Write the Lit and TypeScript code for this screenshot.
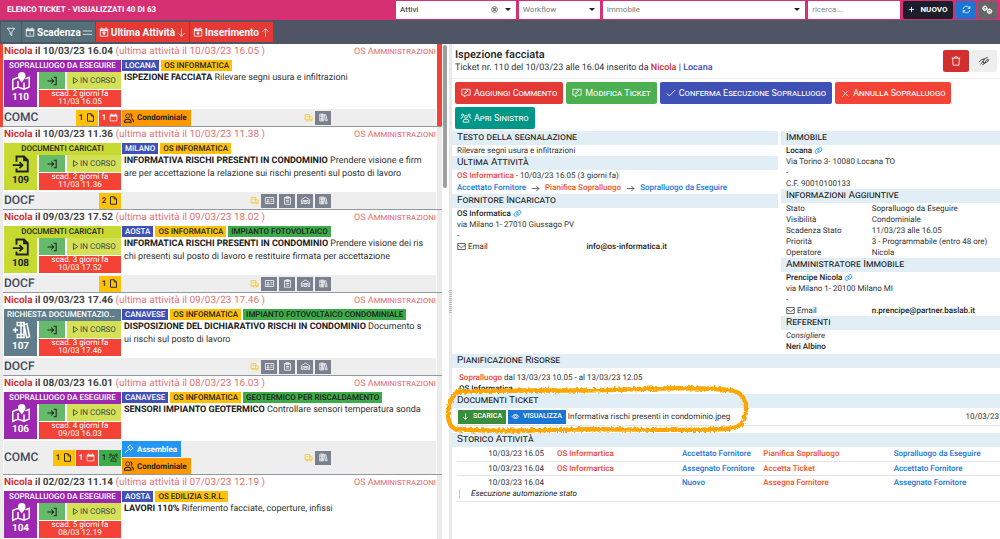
import { LitElement, html, css, svg, nothing } from "lit";
import { customElement, property } from "lit/decorators.js";

const ICONS: Record<string, any> = {
  filter: svg`<path d="M3 3h18l-7 9v9l-4-3v-6z"/>`,
  calInfo: svg`<path d="M3 5h18v17H3zM7 1v4M17 1v4"/><path d="M3 8h18" stroke-width="4"/><path d="M12 12v1M12 14.500v4"/>`,
  calStar: svg`<path d="M3 5h18v17H3zM7 1v4M17 1v4"/><path d="M3 8h18" stroke-width="4"/><path d="M12 11l1 2.300 2.500.2-2 1.600.7 2.400-2.200-1.300-2.200 1.300.7-2.400-2-1.600 2.500-.2z" fill="currentColor"/>`,
  calPlus: svg`<path d="M3 5h18v17H3zM7 1v4M17 1v4"/><path d="M3 8h18" stroke-width="4"/><path d="M12 11.500v7M8.500 15h7" stroke-width="3"/>`,
  calendar: svg`<path d="M3 5h18v16H3zM7 1v4M17 1v4"/><path d="M3 7.500h18" stroke-width="4"/>`,
  equal: svg`<path d="M0 8h24M0 17h24"/>`,
  down: svg`<path d="M12 1v21M4 14l8 8 8-8"/>`,
  up: svg`<path d="M12 23V2M4 10l8-8 8 8"/>`,
  right: svg`<path d="M2 12h19M14 5l7 7-7 7"/>`,
  plus: svg`<path d="M12 3v18M3 12h18"/>`,
  check: svg`<path d="M2 13l6 6L22 5"/>`,
  cross: svg`<path d="M4 4l16 16M20 4L4 20"/>`,
  play: svg`<path d="M5 2l15 10-15 10z"/>`,
  enter: svg`<path d="M1 12h14M10 6l6 6-6 6M16 3h6v18h-6" stroke-width="2.500"/>`,
  clear: svg`<circle cx="12" cy="12" r="10" stroke-width="3"/><path d="M7 7l10 10M17 7L7 17" stroke-width="5"/>`,
  refresh: svg`<path d="M3 11a9 9 0 0 1 15.500-5L21 9M21 3v6h-6M21 13a9 9 0 0 1-15.500 5L3 15M3 21v-6h6"/>`,
  cogs: svg`<circle cx="7" cy="8" r="4.500" stroke-width="3"/><circle cx="7" cy="8" r="1"/><path d="M7 1v2M7 13v2M0 8h2M12 8h2"/><circle cx="18" cy="15" r="4.500" stroke-width="3"/><circle cx="18" cy="15" r="1"/><path d="M18 8v2M18 20v2M23 15h2"/>`,
  comment: svg`<path d="M2 3h20v14h-9l-5 5v-5H2z"/><path d="M9 13l1-3 5-5 2 2-5 5z"/>`,
  users: svg`<circle cx="12" cy="9" r="3.500"/><path d="M5 22v-2a5 5 0 0 1 5-5h4a5 5 0 0 1 5 5v2z"/><circle cx="4" cy="5" r="2.500"/><circle cx="20" cy="5" r="2.500"/><path d="M0 14c0-3 2-4 5-4M24 14c0-3-2-4-5-4"/>`,
  trash: svg`<path d="M2 5h20M8 5l1-3h6l1 3M4 5l1 17h14l1-17"/>`,
  hide: svg`<path d="M0 15c4-6 8-8 14-8M24 9c-3 5-8 8-14 8M4 20c3-5 6-5 8-11 1-3 5-5 9-5M8 21c5-2 7-4 8-8 1-3 4-4 7-5M9 12c-1 3 1 4 3 3"/>`,
  link: svg`<ellipse cx="8.500" cy="13.500" rx="7" ry="4.500" transform="rotate(-55 8.500 13.500)"/><ellipse cx="15.500" cy="10.500" rx="7" ry="4.500" transform="rotate(-55 15.500 10.500)"/>`,
  mail: svg`<path d="M2 4h20v16H2zM2 8l10 7 10-7"/>`,
  eye: svg`<path d="M1 12c5-9 17-9 22 0-5 9-17 9-22 0z"/><circle cx="12" cy="12" r="4"/>`,
  file: svg`<path d="M4 2h10l6 6v14H4zM14 2v6h6" stroke-width="2.500"/>`,
  people: svg`<circle cx="9" cy="7" r="5"/><path d="M1 22c0-5 3-7 8-7s8 2 8 7zM15 2a5 5 0 0 1 2 9M18 14c4 1 5 4 5 8" stroke-width="2.500"/>`,
  hammer: svg`<path d="M2 21l9-8M9 7l7 9M9 8l6-6M15 15l7-5M14 2l8 9"/>`,
  map: svg`<path d="M9 8L7 7.500 1 10v13l7-3 8 3 7-3V7l-5 2M8 12v8M16 14v9" stroke-width="2"/><path d="M13 14c-3-4-5-6-5-9a5 5 0 0 1 10 0c0 3-2 5-5 9z" fill="currentColor" stroke="none"/>`,
  docIn: svg`<path d="M6 9V2h10l5 5v15H6v-4M16 2v5h5M1 13.500h13M10 9.500l4 4-4 4" stroke-width="2.500"/>`,
  books: svg`<path d="M7 7V2h5v20H7v-5M12 2h4v20h-4M1 12h7M4.500 8.500v7M16 5l4-1 3.500 17-4 1zM7 6h9M7 18h9" stroke-width="2"/>`,
  truck: svg`<path d="M6 18H3V4h12v14h-5M15 9h4l3 4v5h-2M6 9h6"/><circle cx="8" cy="19" r="2.300"/><circle cx="18" cy="19" r="2.300"/>`,
  card: svg`<path d="M1 4h22v16H1zM14 9h6M14 14h6"/><circle cx="8" cy="10" r="1.500"/><path d="M4.500 16c0-3 7-3 7 0z"/>`,
  clip: svg`<path d="M4 4h16v18H4zM8 2h8v5H8zM8 12h8M8 16h8"/>`,
  camera: svg`<path d="M1 20V10l11-7 11 7v10h-4v-8H5v8zM8 15h8v5H8z"/>`,
  shelf: svg`<path d="M2 3h6v18H2zM8 3h5v18H8zM14 5l4-1 4 16-4 1zM2 8h11M2 16h11"/>`,
};

const icon = (name: string, cls = "i9") => html`<svg class="ico ${cls}" viewBox="0 0 24 24" aria-hidden="true">${ICONS[name]}</svg>`;

const base = css`
  * { box-sizing: border-box; }
  .ico { flex: none; fill: none; stroke: currentColor; stroke-width: 2; overflow: visible; }
  .i7 { width: 7px; height: 7px; stroke-width: 3; }
  .i9 { width: 9px; height: 9px; }
  .i10 { width: 10px; height: 10px; }
  .i18 { width: 18px; height: 18px; }
  button { font: inherit; color: inherit; border: 0; padding: 0; margin: 0; background: none; cursor: pointer; }
  a { color: inherit; text-decoration: none; }
`;

interface Ticket {
  nr: number;
  date: string;
  last: string;
  state: string;
  kind: "visit" | "docs" | "request";
  due: string;
  days: number;
  tags: [string, string][];
  title: string;
  text: string;
  code: string;
  counts: [number, string, string][];
  groups: [string, string, string][];
  tools: string[];
}

const ALL_TOOLS = ["card", "clip", "camera", "shelf"];

const TICKETS: Ticket[] = [
  { nr: 110, date: "10/03/23 16.04", last: "10/03/23 16.05", state: "Sopralluogo da Eseguire", kind: "visit", due: "11/03 16.05", days: 2,
    tags: [["Locana", "blue"], ["OS Informatica", "amber"]], title: "ISPEZIONE FACCIATA", text: "Rilevare segni usura e infiltrazioni",
    code: "COMC", counts: [[1, "file", "amber"], [1, "calendar", "red"]], groups: [["people", "Condominiale", "orange"]], tools: ["shelf"] },
  { nr: 109, date: "10/03/23 11.36", last: "10/03/23 11.38", state: "Documenti Caricati", kind: "docs", due: "11/03 11.36", days: 2,
    tags: [["Milano", "blue"], ["OS Informatica", "amber"]], title: "INFORMATIVA RISCHI PRESENTI IN CONDOMINIO", text: "Prendere visione e firmare per accettazione la relazione sui rischi presenti sul posto di lavoro",
    code: "DOCF", counts: [[2, "file", "amber"]], groups: [], tools: ALL_TOOLS },
  { nr: 108, date: "09/03/23 17.52", last: "09/03/23 18.02", state: "Documenti Caricati", kind: "docs", due: "10/03 17.52", days: 3,
    tags: [["Aosta", "blue"], ["OS Informatica", "amber"], ["Impianto Fotovoltaico", "green"]], title: "INFORMATICA RISCHI PRESENTI IN CONDOMINIO", text: "Prendere visione dei rischi presenti sul posto di lavoro e restituire firmata per accettazione",
    code: "DOCF", counts: [[1, "file", "amber"]], groups: [], tools: ALL_TOOLS },
  { nr: 107, date: "09/03/23 17.46", last: "09/03/23 17.46", state: "Richiesta Documentazione", kind: "request", due: "10/03 17.46", days: 3,
    tags: [["Canavese", "blue"], ["OS Informatica", "amber"], ["Impianto Fotovoltaico Condominiale", "green"]], title: "DISPOSIZIONE DEL DICHIARATIVO RISCHI IN CONDOMINIO", text: "Documento sui rischi sul posto di lavoro",
    code: "DOCF", counts: [], groups: [], tools: ALL_TOOLS },
  { nr: 106, date: "08/03/23 16.01", last: "08/03/23 16.03", state: "Sopralluogo da Eseguire", kind: "visit", due: "09/03 16.03", days: 4,
    tags: [["Canavese", "blue"], ["OS Informatica", "amber"], ["Geotermico per Riscaldamento", "green"]], title: "SENSORI IMPIANTO GEOTERMICO", text: "Controllare sensori temperatura sonda",
    code: "COMC", counts: [[1, "file", "amber"], [1, "calendar", "red"], [1, "users", "green"]], groups: [["hammer", "Assemblea", "sky"], ["people", "Condominiale", "orange"]], tools: ["shelf"] },
  { nr: 104, date: "02/02/23 11.14", last: "07/03/23 12.19", state: "Sopralluogo da Eseguire", kind: "visit", due: "08/03 12.19", days: 5,
    tags: [["Aosta", "blue"], ["OS Edilizia S.r.l.", "amber"]], title: "LAVORI 110%", text: "Riferimento facciate, coperture, infissi",
    code: "COMC", counts: [[1, "file", "amber"]], groups: [], tools: ["shelf"] },
];

const KIND_ICON = { visit: "map", docs: "docIn", request: "books" };

@customElement("ticket-row")
class TicketRow extends LitElement {
  @property({ attribute: false }) ticket!: Ticket;
  @property({ type: Boolean, reflect: true }) selected = false;

  static styles = [base, css`
    :host { display: block; flex: none; border-left: 3px solid #ebebeb; border-right: 5px solid #ebebeb; }
    :host([selected]) { border-color: #f44336; }
    .row { border-bottom: 1px solid #8f9a9f; padding-left: 1px; margin-right: -5px; padding-right: 6px; }
    .head { display: flex; justify-content: space-between; height: 16px; line-height: 16px; font-size: 10px; font-weight: 700; color: #424242; white-space: nowrap; }
    .who { color: #d32f2f; }
    .when { color: #e57373; font-weight: 400; }
    .owner { color: #e57373; font-size: 9px; font-weight: 400; font-variant: small-caps; }
    .body { display: grid; grid-template-columns: 117px minmax(0, 1fr); column-gap: 1px; margin-bottom: 2px; }
    .status { display: grid; grid-template-columns: 33px 26px minmax(0, 1fr); grid-template-rows: 11px 17px 17px; gap: 1px 2px; text-align: center; }
    .state { grid-column: 1 / -1; height: 12px; line-height: 12px; font-size: 8px; font-weight: 500; text-transform: uppercase; overflow: hidden; text-overflow: ellipsis; white-space: nowrap; padding: 0 3px; }
    .badge { grid-row: 2 / 4; display: flex; flex-direction: column; align-items: center; justify-content: space-between; font-size: 10px; font-weight: 700; line-height: 14px; padding: 0 0 2px; }
    .visit { background: #9c27b0; color: #fff; }
    .docs { background: #c6d930; color: #212121; }
    .request { background: #607d8b; color: #fff; }
    .enter { background: #66bb6a; color: #212121; display: flex; align-items: center; justify-content: center; }
    .run { background: #d4e157; color: #37474f; display: flex; align-items: center; justify-content: center; gap: 1px; font-size: 8px; }
    .due { grid-column: 2 / 4; background: #f44336; color: #fff; font-size: 8px; line-height: 8px; }
    .tags { display: flex; gap: 2px; height: 11px; line-height: 11px; font-size: 8px; font-weight: 500; white-space: nowrap; text-transform: uppercase; }
    .tag { padding: 0 3px; }
    .text { margin: 0; padding: 1px 10px 0 2px; font-size: 9px; line-height: 13px; word-break: break-all; color: #333; }
    .text b { font-weight: 700; color: #212121; }
    .foot { display: grid; grid-template-columns: 117px minmax(0, 1fr) 24%; column-gap: 1px; align-items: center; min-height: 17px; background: #eee; }
    .left { display: flex; gap: 1px; align-items: center; }
    .code { flex: 1; font-size: 12px; line-height: 17px; font-weight: 500; color: #44475c; }
    .count { display: flex; align-items: center; justify-content: center; gap: 3px; width: 22px; height: 16px; font-size: 8px; font-weight: 500; }
    .mid { display: flex; align-items: center; justify-content: space-between; }
    .groups { display: flex; flex-direction: column; align-items: flex-start; gap: 1px; }
    .group { display: flex; align-items: center; gap: 3px; height: 16px; padding: 0 4px 0 2px; font-size: 8px; font-weight: 700; }
    .tools { display: flex; align-items: center; gap: 2px; color: #fff; }
    .truck { color: #ffc107; display: flex; }
    .tool { width: 16px; height: 14px; background: #7b808e; display: flex; align-items: center; justify-content: center; }
    .blue { background: #3f51b5; color: #fff; }
    .amber { background: #ffc107; color: #212121; }
    .green { background: #3dab49; color: #1b1b1b; }
    .red { background: #f44336; color: #fff; }
    .orange { background: #ff9800; color: #212121; }
    .sky { background: #2196f3; color: #fff; }
  `];

  render() {
    const t = this.ticket;
    return html`
      <article class="row">
        <header class="head">
          <span><span class="who">Nicola</span> il ${t.date} <span class="when">(ultima attività il ${t.last} )</span></span>
          <span class="owner">OS Amministrazioni</span>
        </header>
        <div class="body">
          <div class="status">
            <div class="state ${t.kind}">${t.state}</div>
            <div class="badge ${t.kind}">${icon(KIND_ICON[t.kind], "i18")}${t.nr}</div>
            <button class="enter" aria-label="Entra">${icon("enter", "i10")}</button>
            <div class="run">${icon("play", "i7")}IN CORSO</div>
            <div class="due">scad. ${t.days} giorni fa<br>${t.due}</div>
          </div>
          <div>
            <div class="tags">${t.tags.map(([n, c]) => html`<span class="tag ${c}">${n}</span>`)}</div>
            <p class="text"><b>${t.title}</b> ${t.text}</p>
          </div>
        </div>
        <footer class="foot">
          <div class="left">
            <span class="code">${t.code}</span>
            ${t.counts.map(([n, i, c]) => html`<span class="count ${c}">${n}${icon(i)}</span>`)}
          </div>
          <div class="mid">
            <div class="groups">${t.groups.map(([i, n, c]) => html`<span class="group ${c}">${icon(i, "i10")}${n}</span>`)}</div>
            <div class="tools">
              <span class="truck">${icon("truck")}</span>
              ${t.tools.map((n) => html`<button class="tool" aria-label=${n}>${icon(n)}</button>`)}
            </div>
          </div>
        </footer>
      </article>`;
  }
}

@customElement("ticket-detail")
class TicketDetail extends LitElement {
  static styles = [base, css`
    :host { display: block; min-width: 0; background: #fff; color: #333; font-size: 8px; line-height: 11px; }
    .top { display: flex; justify-content: space-between; align-items: center; height: 35px; padding: 0 3px; border-bottom: 1px solid #eee; }
    .title { margin: 0; font-size: 11px; line-height: 15px; font-weight: 500; color: #212121; }
    .sub { margin: 0; font-size: 9px; line-height: 13px; }
    .sub .red { color: #d32f2f; }
    .sub .indigo { color: #3f51b5; }
    .side { display: flex; gap: 2px; }
    .sq { width: 26px; height: 22px; border-radius: 2px; display: flex; align-items: center; justify-content: center; }
    .del { background: #d32f2f; color: #fff; }
    .hide { background: #eee; color: #212121; }
    .actions { display: flex; flex-wrap: wrap; gap: 3px; padding: 3px 3px 2px; }
    .act { height: 22px; padding: 0 6px; border-radius: 2px; display: flex; align-items: center; gap: 3px; color: #fff; font-size: 9px; font-weight: 400; font-variant: small-caps; white-space: nowrap; }
    .a-red { background: #e53935; }
    .a-green { background: #4caf50; }
    .a-indigo { background: #3f51b5; }
    .a-coral { background: #f44336; }
    .a-teal { background: #009688; }
    .cols { display: grid; grid-template-columns: minmax(0, 326fr) minmax(0, 219fr); column-gap: 3px; }
    .h { margin: 0; padding: 0 5px; height: 14px; line-height: 14px; font-size: 10px; font-weight: 400; font-variant: small-caps; color: #212121; background: #e1eef6; }
    .p { padding: 0 5px; }
    .pair { display: grid; grid-template-columns: 41% 59%; margin: 0; }
    .pair dt, .pair dd { margin: 0; white-space: nowrap; }
    .b, b { font-weight: 500; color: #212121; }
    .steps { display: flex; gap: 5px; align-items: center; }
    .roomy { line-height: 12px; }
    .step { color: #1976d2; font-weight: 500; }
    .go { color: #f4511e; font-weight: 500; }
    .hot { color: #f44336; font-weight: 500; }
    .sky { color: #2196f3; }
    .inl { display: flex; align-items: center; gap: 2px; }
    .role { color: #616161; font-weight: 500; font-style: italic; }
    .low { margin-top: 2px; }
    .plan { margin-top: 2px; padding: 2px 7px 0; }
    .docbox { position: relative; }
    .doc { display: flex; align-items: center; gap: 2px; margin-left: 5px; padding: 2px 1px; height: 18px; border-bottom: 1px solid #e4e4e4; }
    .mini { height: 14px; padding: 0 4px; display: flex; align-items: center; gap: 4px; color: #fff; font-size: 7px; font-weight: 500; }
    .m-green { background: #388e3c; }
    .m-blue { background: #1976d2; }
    .when { margin-left: auto; }
    .ring { position: absolute; left: -7px; top: -9px; width: 305px; height: 49px; overflow: visible; pointer-events: none; fill: none; stroke: #ffa502; stroke-width: 4; }
    .hist { width: calc(100% - 5px); margin: 0 0 0 5px; border-collapse: collapse; table-layout: fixed; font-weight: 500; }
    .hist td { padding: 0; height: 14px; }
    .line td { border-bottom: 1px solid #e4e4e4; }
    .hist .d { text-align: right; font-weight: 400; padding-right: 13px; }
    .hist .note { font-style: italic; font-weight: 400; color: #212121; padding: 0; height: 12px; vertical-align: top; }
    .note span { display: block; margin-left: 2px; padding-left: 11px; border-left: 1px solid #ccc; line-height: 10px; }
    .c1 { width: 100px; } .c2 { width: 23%; } .c3 { width: 15%; } .c4 { width: 24%; }
    .gap { margin-top: 7px; }
  `];

  private hist(d: string, who: string, a: string, b: string, c: string, line = true) {
    return html`<tr class=${line ? "line" : ""}><td class="d">${d}</td><td class="hot">${who || nothing}</td><td class="step">${a}</td><td class="go">${b}</td><td class="step">${c}</td></tr>`;
  }

  render() {
    return html`
      <header class="top">
        <div>
          <h1 class="title">Ispezione facciata</h1>
          <p class="sub">Ticket nr. 110 del 10/03/23 alle 16.04 inserito da <b class="red">Nicola</b> | <b class="indigo">Locana</b></p>
        </div>
        <div class="side">
          <button class="sq del" aria-label="Elimina">${icon("trash", "i10")}</button>
          <button class="sq hide" aria-label="Nascondi">${icon("hide", "i10")}</button>
        </div>
      </header>
      <div class="actions">
        <button class="act a-red">${icon("comment", "i10")}Aggiungi Commento</button>
        <button class="act a-green">${icon("comment", "i10")}Modifica Ticket</button>
        <button class="act a-indigo">${icon("check", "i10")}Conferma Esecuzione Sopralluogo</button>
        <button class="act a-coral">${icon("cross", "i9")}Annulla Sopralluogo</button>
        <button class="act a-teal">${icon("users", "i10")}Apri Sinistro</button>
      </div>
      <div class="cols">
        <div>
          <h2 class="h">Testo della segnalazione</h2>
          <div class="p">Rilevare segni usura e infiltrazioni</div>
          <h2 class="h">Ultima Attività</h2>
          <div class="p roomy">
            <div><span class="hot">OS Informartica</span> - 10/03/23 16.05 (3 giorni fa)</div>
            <div class="steps"><span class="step">Accettato Fornitore</span>${icon("right", "i9")}<span class="go">Pianifica Sopralluogo</span>${icon("right", "i9")}<span class="step">Sopralluogo da Eseguire</span></div>
          </div>
          <h2 class="h">Fornitore Incaricato</h2>
          <div class="p">
            <div class="inl b">OS Informatica <a class="sky inl" href="#" aria-label="Apri fornitore">${icon("link", "i9")}</a></div>
            <div>via Milano 1- 27010 Giussago PV</div>
            <div>-</div>
            <dl class="pair"><dt class="inl">${icon("mail")}Email</dt><dd><a class="b" href="mailto:info@os-informatica.it">info@os-informatica.it</a></dd></dl>
          </div>
        </div>
        <div>
          <h2 class="h">Immobile</h2>
          <div class="p">
            <div class="inl b">Locana <a class="sky inl" href="#" aria-label="Apri immobile">${icon("link", "i9")}</a></div>
            <div>Via Torino 3- 10080 Locana TO</div>
            <div>-</div>
            <div>C.F. 90010100133</div>
          </div>
          <h2 class="h">Informazioni Aggiuntive</h2>
          <div class="p">
            <dl class="pair">
              <dt>Stato</dt><dd>Sopralluogo da Eseguire</dd>
              <dt>Visibilità</dt><dd>Condominiale</dd>
              <dt>Scadenza Stato</dt><dd>11/03/23 alle 16.05</dd>
              <dt>Priorità</dt><dd>3 - Programmabile (entro 48 ore)</dd>
              <dt>Operatore</dt><dd>Nicola</dd>
            </dl>
          </div>
          <h2 class="h">Amministratore Immobile</h2>
          <div class="p">
            <div class="inl b">Prencipe Nicola <a class="sky inl" href="#" aria-label="Apri amministratore">${icon("link", "i9")}</a></div>
            <div>via Milano 1- 20100 Milano MI</div>
            <div>-</div>
            <dl class="pair"><dt class="inl">${icon("mail")}Email</dt><dd><a class="b" href="mailto:n.prencipe@partner.baslab.it">n.prencipe@partner.baslab.it</a></dd></dl>
          </div>
          <h2 class="h">Referenti</h2>
          <div class="p"><div class="role">Consigliere</div><div class="b">Neri Albino</div></div>
        </div>
      </div>
      <h2 class="h low">Pianificazione Risorse</h2>
      <div class="plan">
        <div><span class="hot">Sopralluogo</span> dal 13/03/23 10.05 - al 13/03/23 12.05</div>
        <div class="b">OS Informatica</div>
      </div>
      <section class="docbox">
        <h2 class="h">Documenti Ticket</h2>
        <div class="doc">
          <button class="mini m-green">${icon("down", "i7")}SCARICA</button>
          <button class="mini m-blue">${icon("eye", "i7")}VISUALIZZA</button>
          <span>Informativa rischi presenti in condominio.jpeg</span>
          <span class="when">10/03/23</span>
        </div>
        <svg class="ring" viewBox="0 0 303 44" preserveAspectRatio="none" aria-hidden="true">
          <filter id="chalk" x="-5%" y="-20%" width="110%" height="140%"><feTurbulence type="fractalNoise" baseFrequency="0.4" numOctaves="2" seed="4"/><feDisplacementMap in="SourceGraphic" scale="4"/></filter>
          <path filter="url(#chalk)" d="M14 6C60 4 120 6 180 4s90-1 106 1c9 2 13 8 13 17s-4 15-14 17c-50 3-110 0-160 1s-80 2-108 0C5 41 2 32 3 24S7 8 16 5"/>
        </svg>
      </section>
      <h2 class="h gap">Storico Attività</h2>
      <table class="hist">
        <colgroup><col class="c1"><col class="c2"><col class="c3"><col class="c4"><col></colgroup>
        <tbody>
          ${this.hist("10/03/23 16.05", "OS Informartica", "Accettato Fornitore", "Pianifica Sopralluogo", "Sopralluogo da Eseguire")}
          ${this.hist("10/03/23 16.04", "OS Informartica", "Assegnato Fornitore", "Accetta Ticket", "Accettato Fornitore")}
          ${this.hist("10/03/23 16.04", "", "Nuovo", "Assegna Fornitore", "Assegnato Fornitore", false)}
          <tr class="line"><td class="note" colspan="5"><span>Esecuzione automazione stato</span></td></tr>
        </tbody>
      </table>`;
  }
}

@customElement("app-root")
class AppRoot extends LitElement {
  static styles = [base, css`
    :host { display: grid; grid-template-rows: auto auto minmax(0, 1fr); height: 100vh; overflow: hidden; font-family: Roboto, "Liberation Sans", sans-serif; text-rendering: geometricPrecision; background: #fff; }
    .bar { display: grid; grid-template-columns: minmax(0, 387fr) minmax(0, 120fr) minmax(0, 81fr) minmax(0, 203fr) minmax(0, 92fr) auto auto auto; gap: 3px; align-items: center; height: 20px; padding: 0 3px 1px 7px; background: #d63073; color: #fff; font-size: 8px; }
    .name { margin: 0; font-size: 8px; font-weight: 700; }
    .combo { display: flex; align-items: center; height: 18px; background: #fff; padding: 0 5px 0 4px; color: #777; gap: 7px; }
    .combo select { flex: 1; min-width: 0; appearance: none; border: 0; padding: 0; background: none; font: inherit; color: inherit; outline: 0; }
    .dark { color: #212121; }
    .caret { border: 3px solid transparent; border-top: 3px solid #212121; border-bottom: 0; }
    .clear { display: flex; color: #777; }
    .search { width: 100%; height: 18px; border: 0; border-radius: 0; padding: 0 4px; font: inherit; color: #333; outline: 0; }
    .search::placeholder { color: #888; }
    .btn { height: 18px; border-radius: 2px; display: flex; align-items: center; justify-content: center; }
    .new { width: 50px; gap: 5px; background: #1c1e2a; font-weight: 700; }
    .ref { width: 20px; background: #1976d2; }
    .cog { width: 20px; background: #666; margin-left: -2px; }
    .sort { display: flex; gap: 1px; height: 24px; padding: 2px 1px; background: #4f5564; color: #fff; font-size: 10px; font-weight: 700; }
    .s { display: flex; align-items: center; gap: 2px; padding: 0 3px; background: #546e7a; white-space: nowrap; }
    .funnel { padding: 0 5px; }
    .hot { background: #e53935; }
    .main { display: grid; grid-template-columns: minmax(0, 449fr) 3px minmax(0, 548fr); min-height: 0; }
    .listwrap { display: grid; grid-template-columns: minmax(0, 1fr) 7px; min-height: 0; overflow: hidden; }
    .list { display: flex; flex-direction: column; min-height: 0; overflow: hidden; }
    .rail { padding: 1px 2px 0 1px; }
    .thumb { height: 29%; border-radius: 2px; background: #9e9e9e; }
    .split { background: #e9e9e9; display: flex; align-items: center; justify-content: center; padding-top: 20px; }
    .grip { width: 3px; height: 23px; background: repeating-linear-gradient(#bbb 0 1px, #e9e9e9 1px 2px); }
  `];

  render() {
    return html`
      <header class="bar">
        <h1 class="name">ELENCO TICKET - VISUALIZZATI 40 DI 63</h1>
        <div class="combo dark"><select aria-label="Filtro"><option>Attivi</option></select><button class="clear" aria-label="Azzera">${icon("clear", "i7")}</button><span class="caret"></span></div>
        <div class="combo"><select aria-label="Workflow"><option>Workflow</option></select><span class="caret"></span></div>
        <div class="combo"><select aria-label="Immobile"><option>Immobile</option></select><span class="caret"></span></div>
        <input class="search" type="search" aria-label="Ricerca" placeholder="ricerca...">
        <button class="btn new">${icon("plus", "i7")}NUOVO</button>
        <button class="btn ref" aria-label="Aggiorna">${icon("refresh", "i9")}</button>
        <button class="btn cog" aria-label="Impostazioni">${icon("cogs", "i10")}</button>
      </header>
      <nav class="sort">
        <button class="s funnel" aria-label="Filtri">${icon("filter", "i10")}</button>
        <button class="s">${icon("calInfo", "i10")}Scadenza ${icon("equal", "i9")}</button>
        <button class="s hot">${icon("calStar", "i10")}Ultima Attività ${icon("down", "i9")}</button>
        <button class="s hot">${icon("calPlus", "i10")}Inserimento ${icon("up", "i9")}</button>
      </nav>
      <main class="main">
        <div class="listwrap">
          <div class="list">${TICKETS.map((t, i) => html`<ticket-row .ticket=${t} ?selected=${i === 0}></ticket-row>`)}</div>
          <div class="rail"><div class="thumb"></div></div>
        </div>
        <div class="split"><div class="grip"></div></div>
        <ticket-detail></ticket-detail>
      </main>`;
  }
}
